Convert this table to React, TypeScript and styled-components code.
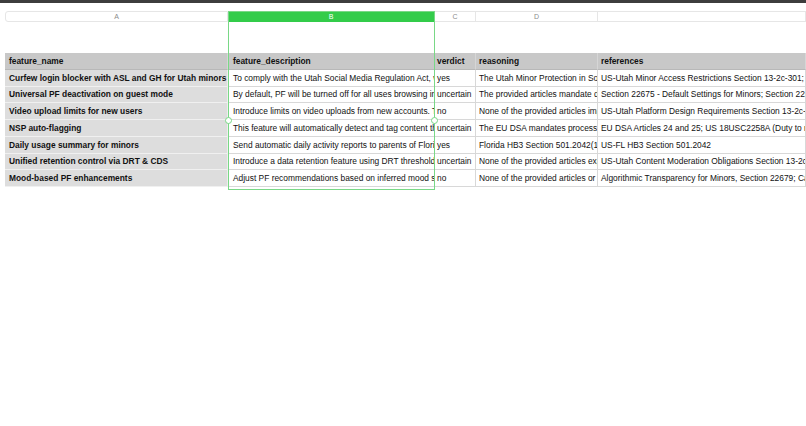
import React from "react";
import styled, { createGlobalStyle } from "styled-components";

const GlobalStyle = createGlobalStyle`
  html, body { margin: 0; padding: 0; background: #ffffff; }
  body { font-family: "Liberation Sans", Arial, Helvetica, sans-serif; overflow: hidden; }
`;

const COLS = "223px 207px 41px 122px 1fr";
const PADS = [4, 5, 2, 3, 3];

const Page = styled.div`
  width: 806px;
  height: 426px;
  background: #fff;
  overflow: hidden;
`;

const TopBar = styled.div`
  height: 3px;
  background: #3d3d3d;
`;

const Sheet = styled.div`
  position: relative;
  padding: 8px 0 0 5px;
`;

const ColHeaderRow = styled.div`
  display: grid;
  grid-template-columns: ${COLS};
  height: 11px;
`;

const ColLetter = styled.div<{ $active?: boolean; $first?: boolean }>`
  display: flex;
  align-items: center;
  justify-content: center;
  font-size: 7px;
  color: ${(p) => (p.$active ? "#ffffff" : "#8c8c8c")};
  background: ${(p) => (p.$active ? "#33cc4a" : "#ffffff")};
  border-top: 1px solid ${(p) => (p.$active ? "#33cc4a" : "#e6e6e6")};
  border-bottom: 1px solid ${(p) => (p.$active ? "#33cc4a" : "#e6e6e6")};
  border-right: 1px solid #e6e6e6;
  border-left: ${(p) => (p.$first ? "1px solid #e6e6e6" : "none")};
  border-radius: ${(p) => (p.$first ? "3px 0 0 3px" : "0")};
  box-sizing: border-box;
`;

const Spacer = styled.div`
  height: 31px;
`;

const Table = styled.div`
  display: grid;
  grid-template-columns: ${COLS};
  grid-auto-rows: 16.75px;
`;

type Kind = "head" | "name" | "body";

const Cell = styled.div<{ $kind: Kind; $pad: number }>`
  box-sizing: border-box;
  display: flex;
  align-items: center;
  padding: 0 0 0 ${(p) => p.$pad}px;
  white-space: nowrap;
  overflow: hidden;
  font-size: 8.4px;
  color: #111;
  font-weight: ${(p) => (p.$kind === "body" ? 400 : 700)};
  background: ${(p) =>
    p.$kind === "head" ? "#c8c8c8" : p.$kind === "name" ? "#dddddd" : "#ffffff"};
  border-right: 1px solid
    ${(p) => (p.$kind === "head" ? "#d6d6d6" : p.$kind === "name" ? "#eeeeee" : "#d8d8d8")};
  border-bottom: 1px solid
    ${(p) => (p.$kind === "head" ? "#b8b8b8" : p.$kind === "name" ? "#f0f0f0" : "#d8d8d8")};
`;

const Selection = styled.div`
  position: absolute;
  left: 228px;
  top: 8px;
  width: 207px;
  height: 179px;
  box-sizing: border-box;
  border: 1px solid #79d886;
  pointer-events: none;
`;

const Handle = styled.div<{ $side: "left" | "right" }>`
  position: absolute;
  top: 105px;
  ${(p) => (p.$side === "left" ? "left: -4px;" : "right: -4px;")}
  width: 5px;
  height: 5px;
  border-radius: 50%;
  background: #ffffff;
  border: 1px solid #79d886;
`;

const letters = ["A", "B", "C", "D", ""];
const headers = ["feature_name", "feature_description", "verdict", "reasoning", "references"];

const rows: string[][] = [
  [
    "Curfew login blocker with ASL and GH for Utah minors",
    "To comply with the Utah Social Media Regulation Act, we are implementing a curfew-based login restriction",
    "yes",
    "The Utah Minor Protection in Social Media Act requires",
    "US-Utah Minor Access Restrictions Section 13-2c-301; Section 13-2c-302",
  ],
  [
    "Universal PF deactivation on guest mode",
    "By default, PF will be turned off for all uses browsing in guest mode",
    "uncertain",
    "The provided articles mandate default settings",
    "Section 22675 - Default Settings for Minors; Section 22676",
  ],
  [
    "Video upload limits for new users",
    "Introduce limits on video uploads from new accounts. This",
    "no",
    "None of the provided articles impose",
    "US-Utah Platform Design Requirements Section 13-2c-401",
  ],
  [
    "NSP auto-flagging",
    "This feature will automatically detect and tag content that violates",
    "uncertain",
    "The EU DSA mandates processing",
    "EU DSA Articles 24 and 25; US 18USC2258A (Duty to report)",
  ],
  [
    "Daily usage summary for minors",
    "Send automatic daily activity reports to parents of Florida minors",
    "yes",
    "Florida HB3 Section 501.2042(1) requires",
    "US-FL HB3 Section 501.2042",
  ],
  [
    "Unified retention control via DRT & CDS",
    "Introduce a data retention feature using DRT thresholds",
    "uncertain",
    "None of the provided articles explicitly",
    "US-Utah Content Moderation Obligations Section 13-2c-501",
  ],
  [
    "Mood-based PF enhancements",
    "Adjust PF recommendations based on inferred mood signals",
    "no",
    "None of the provided articles or",
    "Algorithmic Transparency for Minors, Section 22679; California",
  ],
];

export default function App() {
  return (
    <Page>
      <GlobalStyle />
      <TopBar />
      <Sheet>
        <ColHeaderRow>
          {letters.map((l, i) => (
            <ColLetter key={i} $first={i === 0} $active={i === 1}>
              {l}
            </ColLetter>
          ))}
        </ColHeaderRow>
        <Spacer />
        <Table>
          {headers.map((h, ci) => (
            <Cell key={h} $kind="head" $pad={PADS[ci]}>
              {h}
            </Cell>
          ))}
          {rows.map((r, ri) =>
            r.map((c, ci) => (
              <Cell key={`${ri}-${ci}`} $kind={ci === 0 ? "name" : "body"} $pad={PADS[ci]}>
                {c}
              </Cell>
            ))
          )}
        </Table>
        <Selection>
          <Handle $side="left" />
          <Handle $side="right" />
        </Selection>
      </Sheet>
    </Page>
  );
}
